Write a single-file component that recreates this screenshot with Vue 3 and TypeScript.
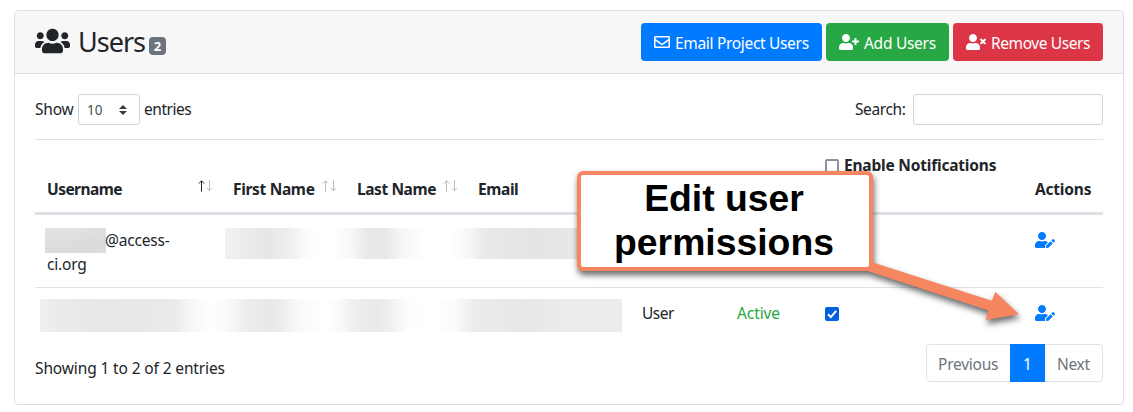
<script setup lang="ts">
interface Column {
  key: string
  label: string
  sort?: 'asc' | 'none'
}

const columns: Column[] = [
  { key: 'username', label: 'Username', sort: 'asc' },
  { key: 'first', label: 'First Name', sort: 'none' },
  { key: 'last', label: 'Last Name', sort: 'none' },
  { key: 'email', label: 'Email' },
  { key: 'role', label: '' },
  { key: 'status', label: '' },
  { key: 'notify', label: 'Enable Notifications' },
  { key: 'actions', label: 'Actions' },
]

const person =
  'M224 256c70.7 0 128-57.3 128-128S294.7 0 224 0 96 57.3 96 128s57.3 128 128 128zm89.6 32h-16.7c-22.2 10.2-46.9 16-72.9 16s-50.6-5.8-72.9-16h-16.7C60.2 288 0 348.2 0 422.4V464c0 26.5 21.5 48 48 48h352c26.5 0 48-21.5 48-48v-41.6c0-74.2-60.2-134.4-134.4-134.4z'
const plus =
  'M624 208h-64v-64c0-8.8-7.2-16-16-16h-32c-8.8 0-16 7.2-16 16v64h-64c-8.8 0-16 7.2-16 16v32c0 8.8 7.2 16 16 16h64v64c0 8.8 7.2 16 16 16h32c8.8 0 16-7.2 16-16v-64h64c8.8 0 16-7.2 16-16v-32c0-8.8-7.2-16-16-16z'
const times =
  'M589.6 240l45.6-45.6c6.3-6.3 6.3-16.5 0-22.8l-22.8-22.8c-6.3-6.3-16.5-6.3-22.8 0L544 194.4l-45.6-45.6c-6.3-6.3-16.5-6.3-22.8 0l-22.8 22.8c-6.3 6.3-6.3 16.5 0 22.8l45.6 45.6-45.6 45.6c-6.3 6.3-6.3 16.5 0 22.8l22.8 22.8c6.3 6.3 16.5 6.3 22.8 0l45.6-45.6 45.6 45.6c6.3 6.3 16.5 6.3 22.8 0l22.8-22.8c6.3-6.3 6.3-16.5 0-22.8L589.6 240z'
const edit =
  'M224 256c70.7 0 128-57.3 128-128S294.7 0 224 0 96 57.3 96 128s57.3 128 128 128zm89.6 32h-16.7c-22.2 10.2-46.9 16-72.9 16s-50.6-5.8-72.9-16h-16.7C60.2 288 0 348.2 0 422.4V464c0 26.5 21.5 48 48 48h274.9c-2.4-6.8-3.4-14-2.6-21.3l6.8-60.9 1.2-11.1 7.9-7.9 77.3-77.3c-24.5-27.7-60-45.5-99.9-45.5zm45.3 145.3l-6.8 61c-1.1 10.2 7.5 18.8 17.6 17.6l60.9-6.8 137.9-137.9-71.7-71.7-137.9 137.8zM633 268.9L595.1 231c-9.3-9.3-24.5-9.3-33.8 0l-37.8 37.8-4.1 4.1 71.8 71.7 41.8-41.8c9.3-9.4 9.3-24.5 0-33.9z'
</script>

<template>
  <div class="page">
    <section class="card">
      <header class="card-header">
        <div class="title">
          <svg class="users-icon" viewBox="0 0 640 512"><path d="M96 224c35.3 0 64-28.7 64-64s-28.7-64-64-64-64 28.7-64 64 28.7 64 64 64zm448 0c35.3 0 64-28.7 64-64s-28.7-64-64-64-64 28.7-64 64 28.7 64 64 64zm32 32h-64c-17.6 0-33.5 7.1-45.1 18.6 40.3 22.1 68.9 62 75.1 109.4h66c17.7 0 32-14.3 32-32v-32c0-35.3-28.7-64-64-64zm-256 0c61.9 0 112-50.1 112-112S381.9 32 320 32 208 82.1 208 144s50.1 112 112 112zm76.8 32h-8.3c-20.8 10-43.9 16-68.5 16s-47.6-6-68.5-16h-8.3C179.6 288 128 339.6 128 403.2V432c0 26.5 21.5 48 48 48h288c26.5 0 48-21.5 48-48v-28.8c0-63.6-51.6-115.2-115.2-115.2zm-223.7-13.4C161.5 263.1 145.6 256 128 256H64c-35.3 0-64 28.7-64 64v32c0 17.7 14.3 32 32 32h65.9c6.3-47.4 34.9-87.3 75.2-109.4z" /></svg>
          <h3>Users</h3>
          <span class="badge">2</span>
        </div>
        <div class="buttons">
          <button class="btn primary">
            <svg class="mail" viewBox="0 0 512 512"><path d="M464 64H48C21.49 64 0 85.49 0 112v288c0 26.51 21.49 48 48 48h416c26.51 0 48-21.49 48-48V112c0-26.51-21.49-48-48-48zm0 48v40.805c-22.422 18.259-58.168 46.651-134.587 106.49-16.841 13.247-50.201 45.072-73.413 44.701-23.208.375-56.579-31.459-73.413-44.701C106.18 199.465 70.425 171.067 48 152.805V112h416zM48 400V214.398c22.914 18.251 55.409 43.862 104.938 82.646 21.857 17.205 60.134 55.186 103.062 54.955 42.717.231 80.509-37.199 103.053-54.947 49.528-38.783 82.032-64.401 104.947-82.653V400H48z" /></svg>
            <span>Email Project Users</span>
          </button>
          <button class="btn success">
            <svg viewBox="0 0 640 512"><path :d="person" /><path :d="plus" /></svg>
            <span>Add Users</span>
          </button>
          <button class="btn danger">
            <svg viewBox="0 0 640 512"><path :d="person" /><path :d="times" /></svg>
            <span>Remove Users</span>
          </button>
        </div>
      </header>

      <div class="controls">
        <div class="length">
          <span class="show">Show</span>
          <div class="select">
            <span>10</span>
            <svg viewBox="0 0 4 5"><path d="M2 0L0 2h4zm0 5L0 3h4z" /></svg>
          </div>
          <span class="entries">entries</span>
        </div>
        <label class="search"><span>Search:</span><input type="text" /></label>
      </div>

      <table>
        <colgroup><col v-for="c in columns" :key="c.key" :class="'col-' + c.key" /></colgroup>
        <thead>
          <tr>
            <th v-for="c in columns" :key="c.key" :class="'th-' + c.key">
              <span v-if="c.key === 'notify'" class="check"></span>
              <span class="th-label">{{ c.label }}</span>
              <svg v-if="c.sort" class="sort" :class="c.sort" viewBox="0 0 15 12">
                <path class="up" d="M3.5 11.5V1M.8 3.5L3.5.8l2.7 2.7" />
                <path class="down" d="M11.5 0v10.5M8.8 8l2.7 2.7L14.2 8" />
              </svg>
            </th>
          </tr>
        </thead>
        <tbody>
          <tr>
            <td class="name"><i class="redact short"></i><span class="domain">@access-</span><br /><span>ci.org</span></td>
            <td><i class="redact people"></i></td>
            <td></td>
            <td></td>
            <td></td>
            <td></td>
            <td></td>
            <td><svg class="edit" viewBox="0 0 640 512"><path :d="edit" /></svg></td>
          </tr>
          <tr>
            <td><i class="redact full"></i></td>
            <td></td>
            <td></td>
            <td></td>
            <td class="text"><span class="role">User</span></td>
            <td class="text"><span class="active">Active</span></td>
            <td class="text">
              <span class="check on"><svg viewBox="0 0 14 14"><path d="M3 7.3l2.8 2.8L11.2 3.8" /></svg></span>
            </td>
            <td><svg class="edit" viewBox="0 0 640 512"><path :d="edit" /></svg></td>
          </tr>
        </tbody>
      </table>

      <footer>
        <span class="info">Showing 1 to 2 of 2 entries</span>
        <nav>
          <span class="prev">Previous</span>
          <span class="current">1</span>
          <span class="next">Next</span>
        </nav>
      </footer>
    </section>

    <div class="callout">
      <div class="callout-box">Edit user<br />permissions</div>
      <svg class="arrow" viewBox="0 0 170 80">
        <path d="M13 12.5L131.8 50.8L135.3 41.8L159 64.3L125.7 70L128.5 60.5L6 20.5Z" />
      </svg>
    </div>
  </div>
</template>

<style>
body {
  margin: 0;
  background: #fff;
}
</style>

<style scoped>
* {
  box-sizing: border-box;
}
.page {
  position: relative;
  width: 1133px;
  height: 412px;
  padding: 10px 9px 7px 14px;
  overflow: hidden;
  background: #fff;
  color: #212529;
  font: 15.5px/24px 'Noto Sans', 'Open Sans', sans-serif;
}
.card {
  height: 395px;
  border: 1px solid #dfdfdf;
  border-radius: 4px;
  overflow: hidden;
}
.card-header {
  display: flex;
  justify-content: space-between;
  height: 63px;
  padding: 12px 20px;
  background: #f7f7f7;
  border-bottom: 1px solid #dfdfdf;
}
.title {
  display: flex;
}
.users-icon {
  width: 35px;
  height: 28px;
  margin-top: 4px;
  fill: #212529;
}
h3 {
  margin: 0 0 0 8px;
  width: 71px;
  font-size: 27px;
  line-height: 37px;
  font-weight: 400;
  letter-spacing: -1px;
}
.badge {
  width: 17px;
  height: 18px;
  margin-top: 14px;
  border-radius: 4px;
  background: #6c757d;
  color: #fff;
  font-size: 13px;
  font-weight: 700;
  line-height: 18px;
  text-align: center;
}
.buttons {
  display: flex;
  gap: 4px;
}
.btn {
  display: flex;
  align-items: center;
  height: 38px;
  padding: 0 0 0 13px;
  border: 0;
  border-radius: 4px;
  color: #fff;
  font: inherit;
  white-space: nowrap;
}
.btn svg {
  flex: none;
  width: 20px;
  height: 16px;
  margin-right: 5px;
  fill: #fff;
}
.btn span {
  padding-top: 2px;
}
.btn .mail {
  width: 16px;
  margin-right: 5px;
}
.primary {
  width: 181px;
  background: #007bff;
  letter-spacing: -0.32px;
}
.success {
  width: 123px;
  background: #28a745;
  letter-spacing: -0.28px;
}
.danger {
  width: 150px;
  background: #dc3545;
  letter-spacing: -0.4px;
}
.controls {
  display: flex;
  justify-content: space-between;
  height: 65px;
  padding: 20px 20px 0;
}
.length,
.search {
  display: flex;
  height: 31px;
}
.length > span {
  line-height: 30px;
}
.show {
  width: 43px;
  letter-spacing: -0.2px;
}
.select {
  display: flex;
  align-items: center;
  justify-content: space-between;
  width: 62px;
  padding: 0 12px 0 8px;
  border: 1px solid #ced4da;
  border-radius: 3px;
  color: #495057;
  font-size: 13.5px;
}
.select svg {
  width: 8px;
  height: 10px;
  fill: #343a40;
}
.entries {
  margin-left: 4px;
  letter-spacing: -0.45px;
}
.search span {
  width: 57px;
  margin-right: 1px;
  line-height: 31px;
  letter-spacing: -0.4px;
}
.search input {
  width: 190px;
  height: 31px;
  border: 1px solid #ced4da;
  border-radius: 3px;
  background: #fff;
}
table {
  width: 1068px;
  margin: 0 20px;
  table-layout: fixed;
  border-spacing: 0;
}
.col-username { width: 186px; }
.col-first { width: 124px; }
.col-last { width: 121px; }
.col-email { width: 164px; }
.col-role { width: 95px; }
.col-status { width: 88px; }
.col-notify { width: 210px; }
.col-actions { width: 80px; }
th {
  position: relative;
  height: 76px;
  padding: 0 0 11px 12px;
  border-top: 1px solid #dee2e6;
  border-bottom: 3px solid #dee2e6;
  text-align: left;
  vertical-align: bottom;
  font-size: 15.5px;
  font-weight: 700;
  letter-spacing: -0.33px;
  white-space: nowrap;
}
.th-username {
  letter-spacing: -0.55px;
}
.th-last {
  letter-spacing: -0.42px;
}
.th-email {
  letter-spacing: -0.4px;
}
.th-actions {
  letter-spacing: -0.2px;
}
.th-notify {
  padding-bottom: 35px;
  letter-spacing: -0.2px;
}
.th-notify .check {
  margin-right: 5px;
}
.sort {
  position: absolute;
  right: 8px;
  bottom: 20px;
  width: 15px;
  height: 12px;
  fill: none;
  stroke: #b9bbbd;
  stroke-width: 1;
}
.sort.asc .up {
  stroke: #212529;
}
td {
  position: relative;
  height: 72px;
  padding: 12px 0 0 12px;
  vertical-align: top;
}
tbody tr + tr td {
  height: 49px;
  border-top: 1px solid #dee2e6;
}
tbody tr + tr .text {
  padding-top: 13px;
}
td.name {
  padding-top: 13px;
  letter-spacing: -0.2px;
}
.domain {
  margin-left: -1px;
}
.redact {
  position: absolute;
  height: 31px;
}
.redact.short {
  position: static;
  display: inline-block;
  width: 61px;
  height: 25px;
  margin: 0 0 -1px -2px;
  vertical-align: top;
  background: linear-gradient(170deg, #e2e3e3, #d9dadb 80%, #dedfdf);
}
.redact.people {
  left: 4px;
  top: 13px;
  width: 353px;
  background: linear-gradient(90deg, #f0f1f1 0, #e6e6e7 42px, #f0f0f0 67px, #fafafa 79px, #fff 94px, #fff 108px, #f8f8f8 125px, #e8e8e9 143px, #e8e8e9 160px, #f5f5f5 175px, #fff 200px, #fff 225px, #f6f6f6 244px, #e8e9e9 260px, #e4e4e5 310px, #e7e8e8 353px);
}
.redact.full {
  left: 5px;
  top: 11px;
  width: 582px;
  height: 33px;
  z-index: 1;
  background: linear-gradient(90deg, #f0f0f0 0, #eaebeb 20px, #e6e7e8 65px, #e9eaea 135px, #f5f5f5 148px, #fff 170px, #fbfbfb 185px, #eeeeef 205px, #e7e8e8 227px, #ececec 240px, #fafafa 260px, #fff 285px, #fafafa 300px, #eeeeee 315px, #e9e9ea 338px, #f0f0f0 350px, #fefefe 370px, #fff 395px, #fafafa 415px, #ececed 435px, #e6e7e7 485px, #ebecec 525px, #ececed 582px);
}
.edit {
  display: block;
  width: 20px;
  height: 16px;
  margin-top: 5px;
  fill: #007bff;
}
.role {
  letter-spacing: -0.5px;
}
.active {
  color: #28a745;
  letter-spacing: -0.1px;
}
.check {
  display: inline-block;
  width: 14px;
  height: 14px;
  border: 2px solid #8f8f9d;
  border-radius: 2px;
  vertical-align: -2px;
}
.check.on {
  border: 0;
  background: #0060df;
}
.check svg {
  display: block;
  fill: none;
  stroke: #fff;
  stroke-width: 2;
}
footer {
  display: flex;
  justify-content: space-between;
  padding: 8px 20px 0;
}
.info {
  padding-top: 12px;
  letter-spacing: -0.13px;
}
nav {
  display: flex;
  width: 177px;
  height: 38px;
  border: 1px solid #dee2e6;
  border-radius: 4px;
  color: #6c757d;
  line-height: 39px;
}
.prev {
  width: 83px;
  padding-left: 11px;
  letter-spacing: -0.25px;
}
.current {
  width: 35px;
  height: 38px;
  margin-top: -1px;
  background: #007bff;
  color: #fff;
  text-align: center;
  line-height: 41px;
}
.next {
  padding-left: 12px;
  letter-spacing: -0.3px;
}
.callout {
  position: absolute;
  left: 577px;
  top: 171px;
  z-index: 2;
  filter: drop-shadow(1px 4px 3px rgba(0, 0, 0, 0.6));
}
.callout-box {
  width: 296px;
  height: 100px;
  padding: 1px 2px 0 0;
  border: 4px solid #f58660;
  border-radius: 6px;
  background: #fff;
  color: #000;
  font: bold 37.33px/44px 'Liberation Sans', Arial, sans-serif;
  text-align: center;
}
.arrow {
  position: absolute;
  left: 283px;
  top: 79px;
  width: 170px;
  height: 80px;
  fill: #f58660;
}
</style>
